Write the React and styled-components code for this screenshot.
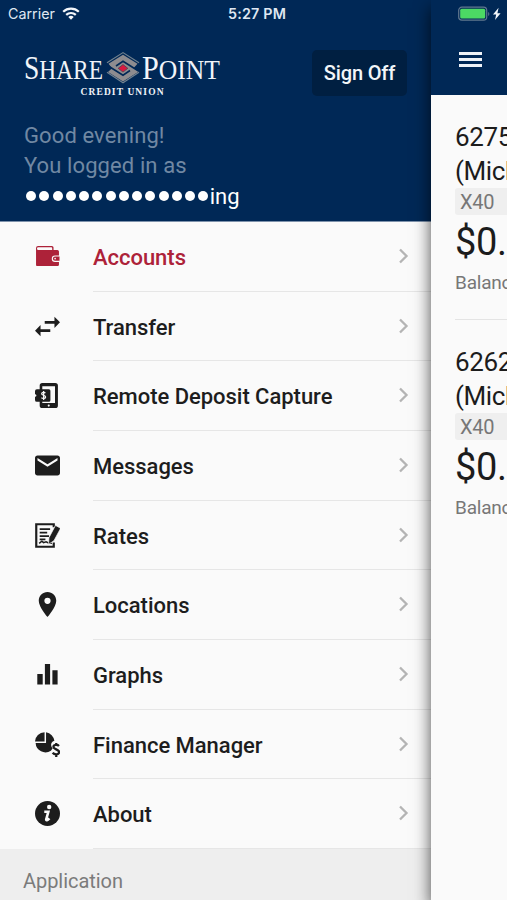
import React from 'react';
import styled, { createGlobalStyle } from 'styled-components';

const GlobalStyle = createGlobalStyle`
  * {
    box-sizing: border-box;
  }

  body {
    margin: 0;
    background: #fafafa;
    font-family: Roboto, sans-serif;
    overflow: hidden;
  }
`;

const Screen = styled.div`
  position: relative;
  display: flex;
  width: 507px;
  height: 900px;
  overflow: hidden;
`;

const StatusBar = styled.div`
  position: absolute;
  z-index: 2;
  top: 0;
  left: 0;
  display: grid;
  grid-template-columns: 1fr auto 1fr;
  align-items: center;
  width: 100%;
  height: 27px;
  padding: 0 5px 0 8px;
  color: #dfe7f2;
  font-family: Inter, sans-serif;
  font-size: 14.3px;
`;

const Carrier = styled.div`
  display: flex;
  align-items: center;
  gap: 7px;
`;

const Clock = styled.div`
  padding-left: 4px;
  font-weight: 600;
  letter-spacing: 0.2px;
`;

const Power = styled.div`
  display: flex;
  align-items: center;
  justify-content: flex-end;
`;

const Drawer = styled.div`
  display: flex;
  flex-direction: column;
  flex: 0 0 431px;
  background: #fafafa;
`;

const DrawerHeader = styled.div`
  flex: 0 0 222px;
  padding: 49px 24px 0;
  background: #002856;
  border-bottom: 1px solid #7e92ab;
`;

const Brand = styled.div`
  display: flex;
  justify-content: space-between;
  align-items: flex-start;
  height: 72px;
`;

const SignOff = styled.button`
  width: 95px;
  height: 46px;
  margin-top: 1px;
  padding: 0;
  border: 0;
  border-radius: 5px;
  background: #001f41;
  color: #f2f5f9;
  font: 500 20px Roboto, sans-serif;
  letter-spacing: -0.15px;
`;

const Greeting = styled.div`
  color: #7188a3;
  font-size: 22px;
  line-height: 30px;
  letter-spacing: 0.1px;
`;

const UserName = styled.div`
  display: flex;
  align-items: center;
  height: 30px;
  padding-left: 2px;
  color: #fff;
  font-size: 22px;
`;

const Dot = styled.span`
  width: 10px;
  height: 10px;
  margin-right: 3.25px;
  border-radius: 50%;
  background: #fff;

  &:last-of-type {
    margin-right: 1.5px;
  }
`;

const Menu = styled.div`
  display: flex;
  flex-direction: column;
  flex: 0 0 627px;
`;

const MenuItem = styled.div`
  display: flex;
  align-items: center;
  flex: 1;
  padding-left: 35px;
  color: ${props => (props.$active ? '#ad2239' : '#1d1d1d')};

  > svg {
    flex: none;
    margin-bottom: 1px;
  }
`;

const MenuLabel = styled.div`
  display: flex;
  align-items: center;
  justify-content: space-between;
  flex: 1;
  align-self: stretch;
  margin-left: 33px;
  padding: 2px 21px 0 0;
  border-bottom: 1px solid #e6e6e6;
  font-size: 22px;
  font-weight: 500;
  letter-spacing: -0.03px;

  svg {
    margin-bottom: 3px;
  }
`;

const SectionTitle = styled.div`
  flex: 1;
  padding: 19px 23px 0;
  background: #eee;
  color: #7b7b7b;
  font-size: 20px;
  line-height: 26px;
  letter-spacing: -0.05px;
`;

const Content = styled.div`
  z-index: 1;
  flex: 0 0 76px;
  background: #fafafa;
  box-shadow: 0 8px 16px rgba(0, 0, 0, 0.7);
`;

const TopBar = styled.div`
  height: 95px;
  padding: 51px 0 0 28px;
  background: #002856;
`;

const Burger = styled.div`
  display: flex;
  flex-direction: column;
  gap: 3px;
  width: 23px;
  padding-top: 1px;
`;

const BurgerLine = styled.div`
  height: 3px;
  background: #eef2f7;
`;

const Account = styled.div`
  height: 225px;
  margin-left: 24px;
  padding-top: 25px;
  border-bottom: ${props => (props.$last ? '0' : '1px solid #e4e4e4')};
  overflow: hidden;
  white-space: nowrap;
  color: #1c1c1c;
`;

const AccountName = styled.div`
  font-size: 26px;
  line-height: 34px;
  letter-spacing: -0.4px;
`;

const Suffix = styled.div`
  height: 27px;
  padding: 1px 0 0 5px;
  border-radius: 3px 0 0 3px;
  background: #efefef;
  color: #777;
  font-size: 20px;
  line-height: 27px;
  letter-spacing: -0.3px;
`;

const Amount = styled.div`
  padding-top: 1px;
  font-size: 38px;
  line-height: 52px;
  letter-spacing: -0.3px;
`;

const Caption = styled.div`
  color: #777;
  font-size: 19px;
  line-height: 30px;
  letter-spacing: -0.2px;
`;

const Icon = ({ viewBox = '0 0 24 24', children }) => (
  <svg width='25' height='25' viewBox={viewBox} fill='currentColor'>{children}</svg>
);

const WalletIcon = () => (
  <Icon>
    <path d='M3 1.8h13.2a1.6 1.6 0 0 1 1.6 1.6v2.8h-1.3V4.1a.9.9 0 0 0-.9-.9H3.2a.9.9 0 0 0 0 2.6H21.500a1.500 1.500 0 0 1 1.500 1.500v3.700h-3.800a3.100 3.100 0 0 0 0 6.200H23v2.600a1.300 1.300 0 0 1-1.300 1.300H2.500A1.500 1.500 0 0 1 1 20.300V3.8a2 2 0 0 1 2-2z' />
    <path d='M19.200 12.100H23.500v4h-4.300a2 2 0 0 1 0-4z' />
    <circle cx='19.3' cy='14.1' r='.8' fill='#fafafa' />
  </Icon>
);

const TransferIcon = () => (
  <Icon viewBox='3 3 18 18'>
    <path d='M6.99 11 3 15l3.99 4v-3H14v-2H6.99zM21 9l-3.99-4v3H10v2h7.01v3z' />
  </Icon>
);

const DepositIcon = () => (
  <Icon>
    <path fillRule='evenodd' d='M7 0h12.5a2.5 2.5 0 0 1 2.5 2.5v19a2.5 2.5 0 0 1-2.5 2.5H7a2.5 2.5 0 0 1-2.5-2.5V18H1.8A1.8 1.8 0 0 1 0 16.2V7.8A1.8 1.8 0 0 1 1.8 6h2.7V2.5A2.5 2.5 0 0 1 7 0zm0 3v3h6.300a1.500 1.500 0 0 1 1.500 1.500v9a1.500 1.500 0 0 1-1.500 1.500H7v1.300h12.2V3z' />
    <circle cx='13.2' cy='21.7' r='1' fill='#fafafa' />
    <circle cx='0' cy='12' r='1.300' fill='#fafafa' />
    <path d='M10 9.600C8.800 8.500 6.400 8.700 6.400 10.300s3.800 1.400 3.800 3.100-2.500 1.900-4.100.8M8.300 7.600v8.800' fill='none' stroke='#fafafa' strokeWidth='1.200' />
  </Icon>
);

const MailIcon = () => (
  <Icon viewBox='2 2 20 20'>
    <path d='M20 4H4c-1.1 0-1.99.9-1.99 2L2 18c0 1.1.9 2 2 2h16c1.1 0 2-.9 2-2V6c0-1.1-.9-2-2-2zm0 4-8 5-8-5V6l8 5 8-5z' />
  </Icon>
);

const RatesIcon = () => (
  <Icon>
    <path d='M18 4V1.2H1.2v21.6H18v-4' fill='none' stroke='currentColor' strokeWidth='2.1' />
    <path d='M4.5 5.8h10M4.5 9.3h7.2M4.5 12.5h9M4.5 15.700h5.5' fill='none' stroke='currentColor' strokeWidth='1.7' />
    <path d='m4 19.500 2.600-2 1.600 1.400 2.400-.8 3 1.200h2.600' fill='none' stroke='currentColor' strokeWidth='1.500' />
    <path d='m20.200 2.600 3.500 1.900c.7.4.7.9.4 1.500L18.200 17l-5.200 3.500.4-6.400 5.800-11c.3-.6.6-.7 1-.5z' stroke='#fafafa' strokeWidth='.7' />
  </Icon>
);

const PinIcon = () => (
  <Icon viewBox='2 2 20 20'>
    <path d='M12 2C8.13 2 5 5.13 5 9c0 5.25 7 13 7 13s7-7.75 7-13c0-3.87-3.13-7-7-7zm0 9.5a2.5 2.5 0 1 1 0-5 2.5 2.5 0 0 1 0 5z' />
  </Icon>
);

const GraphIcon = () => (
  <Icon>
    <path d='M2.2 11.5h5.2v10H2.2zM9.5 2h5v19.5h-5zM16.7 7.8h5v13.7h-5z' />
  </Icon>
);

const FinanceIcon = () => (
  <Icon>
    <path d='M9.200.2v9H0A9.200 9.200 0 0 1 9.200.2z' />
    <path d='M10.600.3a9.300 9.300 0 0 1 8 8.200c-2.400.5-3.600 2.700-3 5 .2.900.7 1.600 1.400 2.100l-1.700 2.300A9.400 9.400 0 0 1 .6 10.600h10z' />
    <path d='M23 13.400c-1.500-1.700-5.300-1.300-5.300 1s5.500 2.200 5.500 4.800-4.300 3-6.300.8M20.400 10.500v3M20.400 20.500V24' fill='none' stroke='currentColor' strokeWidth='2.200' />
  </Icon>
);

const AboutIcon = () => (
  <Icon>
    <circle cx='12' cy='12' r='12' />
    <circle cx='13.600' cy='5.800' r='2.100' fill='#fafafa' />
    <path d='M8.900 10.300h3.900l-2 7.200c-.4 1.500 1.100 1.200 3-.8' fill='none' stroke='#fafafa' strokeWidth='2.500' />
  </Icon>
);

const Chevron = () => (
  <svg width='12' height='16' viewBox='0 0 12 16' fill='none' stroke='#b4b4b4' strokeWidth='2.3'>
    <path d='m2 1.5 6.5 6.500L2 14.500' />
  </svg>
);

const Logo = () => (
  <svg width='198' height='50' viewBox='0 0 198 50' fill='#f0f4f9' fontFamily='Liberation Serif, serif'>
    <text x='0' y='29.800' fontSize='33' textLength='79' lengthAdjust='spacingAndGlyphs'>
      S<tspan fontSize='28'>HARE</tspan>
    </text>
    <text x='118' y='29.800' fontSize='33' textLength='78' lengthAdjust='spacingAndGlyphs'>
      P<tspan fontSize='28'>OINT</tspan>
    </text>
    <text x='56.500' y='46' fontSize='9.500' fontWeight='700' textLength='83'>CREDIT UNION</text>
    <path d='m99 5.800 14.500 9-3.800 4.300 4.800 3.700L99 32.500 84 23l4-3.700-3.500-4.500z' fill='#8e8c8f' />
    <path d='M83 13.800 99 3.600l16 10.200M83 23.300 99 33.800l16-10.500' fill='none' stroke='#71828f' strokeWidth='1.200' />
    <path d='m83.500 16.500 15.500 9.700 7-4.700M114.500 22 99 12.300l-7 4.700' fill='none' stroke='#002856' strokeWidth='1.600' />
    <path d='m99 15.500-4.800 3.800 4.800 3.800 4.800-3.800z' fill='#d71940' stroke='#4b4050' strokeWidth='.8' />
  </svg>
);

const WifiIcon = () => (
  <svg width='18' height='13' viewBox='0 0 18 13' fill='none' stroke='#f4f7fb' strokeWidth='2.2'>
    <path d='M1.2 4.700a11.200 11.200 0 0 1 15.600 0M4.200 7.900a7 7 0 0 1 9.600 0' />
    <path d='M6.300 10a4 4 0 0 1 5.400 0L9 12.700z' fill='#f4f7fb' stroke='none' />
  </svg>
);

const BatteryIcon = () => (
  <svg width='44' height='16' viewBox='0 0 44 16'>
    <rect x='.7' y='1.200' width='28' height='13' rx='3.200' fill='none' stroke='#60788f' strokeWidth='1.200' />
    <rect x='2.2' y='2.800' width='25' height='9.800' rx='1.500' fill='#4cd964' />
    <path d='M30.200 6c1.500.6 1.500 3.400 0 4z' fill='#60788f' />
    <path d='m40.600 1.800-5.600 6.700h3.200L37 14l5.600-6.800h-3.200z' fill='#f4f7fb' />
  </svg>
);

const menuItems = [
  { label: 'Accounts', icon: WalletIcon, active: true },
  { label: 'Transfer', icon: TransferIcon },
  { label: 'Remote Deposit Capture', icon: DepositIcon },
  { label: 'Messages', icon: MailIcon },
  { label: 'Rates', icon: RatesIcon },
  { label: 'Locations', icon: PinIcon },
  { label: 'Graphs', icon: GraphIcon },
  { label: 'Finance Manager', icon: FinanceIcon },
  { label: 'About', icon: AboutIcon },
];

const accounts = ['6275', '6262'];

const App = () => {
  return (
    <Screen>
      <GlobalStyle />
      <StatusBar>
        <Carrier>Carrier <WifiIcon /></Carrier>
        <Clock>5:27 PM</Clock>
        <Power><BatteryIcon /></Power>
      </StatusBar>
      <Drawer>
        <DrawerHeader>
          <Brand>
            <Logo />
            <SignOff>Sign Off</SignOff>
          </Brand>
          <Greeting>Good evening!<br />You logged in as</Greeting>
          <UserName>
            {Array.from({ length: 14 }, (_, i) => <Dot key={i} />)}
            ing
          </UserName>
        </DrawerHeader>
        <Menu>
          {menuItems.map(({ label, icon: ItemIcon, active }) => (
            <MenuItem key={label} $active={active}>
              <ItemIcon />
              <MenuLabel>{label}<Chevron /></MenuLabel>
            </MenuItem>
          ))}
        </Menu>
        <SectionTitle>Application</SectionTitle>
      </Drawer>
      <Content>
        <TopBar>
          <Burger>
            <BurgerLine />
            <BurgerLine />
            <BurgerLine />
          </Burger>
        </TopBar>
        {accounts.map((number, i) => (
          <Account key={number} $last={i === accounts.length - 1}>
            <AccountName>{number}<br />(Mich</AccountName>
            <Suffix>X40</Suffix>
            <Amount>$0.</Amount>
            <Caption>Balance</Caption>
          </Account>
        ))}
      </Content>
    </Screen>
  );
};

export default App;
